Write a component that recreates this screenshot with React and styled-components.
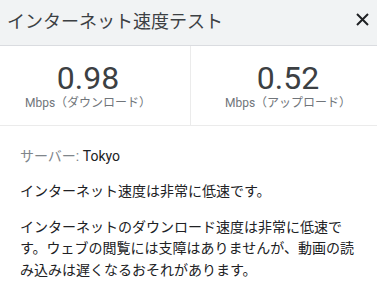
import React from 'react';
import styled, { createGlobalStyle } from 'styled-components';

const GlobalStyle = createGlobalStyle`
	html, body {
		margin: 0;
		padding: 0;
		background: #ffffff;
	}
	body {
		font-family: Roboto, "Noto Sans CJK JP", sans-serif;
		color: #202124;
	}
`;

const stats = [
	{ value: '0.98', label: 'Mbps（ダウンロード）', side: 'left' },
	{ value: '0.52', label: 'Mbps（アップロード）', side: 'right' },
];

export default function App() {
	return (
		<>
			<GlobalStyle />
			<Panel>
				<Header>
					<Title>インターネット速度テスト</Title>
					<Close aria-label='閉じる'>
						<svg width='13' height='13' viewBox='0 0 13 13'>
							<path d='M1 1 L12 12 M12 1 L1 12' stroke='#202124' strokeWidth='2' />
						</svg>
					</Close>
				</Header>

				<Stats>
					{stats.map((s) => (
						<Stat key={s.side} side={s.side}>
							<Value>{s.value}</Value>
							<Unit>{s.label}</Unit>
						</Stat>
					))}
				</Stats>

				<Body>
					<Server>
						<span>サーバー: </span>Tokyo
					</Server>
					<Text>インターネット速度は非常に低速です。</Text>
					<Text>
						インターネットのダウンロード速度は非常に低速です。ウェブの閲覧には支障はありませんが、動画の読み込みは遅くなるおそれがあります。
					</Text>
				</Body>
			</Panel>
		</>
	);
}

const Panel = styled.div`
	width: 377px;
	height: 287px;
	overflow: hidden;
	background: #ffffff;
`;

const Header = styled.div`
	height: 45px;
	background: #f1f3f4;
	border-bottom: 1px solid #dadce0;
	display: flex;
	align-items: center;
	justify-content: space-between;
	padding: 0 8px 0 7px;
	box-sizing: content-box;
`;

const Title = styled.div`
	font-size: 18px;
	line-height: 24px;
	color: #3c4043;
	margin-top: -2px;
`;

const Close = styled.div`
	width: 13px;
	height: 13px;
	display: flex;
	margin-top: -6px;
`;

const Stats = styled.div`
	display: grid;
	grid-template-columns: 190px 1fr;
	border-bottom: 1px solid #ebebeb;
`;

const Stat = styled.div`
	display: flex;
	flex-direction: column;
	align-items: center;
	padding: 14px ${(p) => (p.side === 'left' ? '14px' : '0')} 14px ${(p) => (p.side === 'left' ? '0' : '8px')};
	border-left: ${(p) => (p.side === 'right' ? '1px solid #ebebeb' : 'none')};
`;

const Value = styled.div`
	font-size: 32px;
	line-height: 36px;
	color: #3c4043;
`;

const Unit = styled.div`
	font-size: 12px;
	line-height: 16px;
	color: #70757a;
	margin-top: -1px;
`;

const Body = styled.div`
	padding: 19px 20px 0 20px;
	display: flex;
	flex-direction: column;
	gap: 14px;
`;

const Server = styled.div`
	font-size: 14px;
	line-height: 22px;
	color: #202124;

	span {
		color: #80868b;
	}
`;

const Text = styled.p`
	margin: 0;
	font-size: 14px;
	line-height: 21.5px;
	color: #202124;
`;
